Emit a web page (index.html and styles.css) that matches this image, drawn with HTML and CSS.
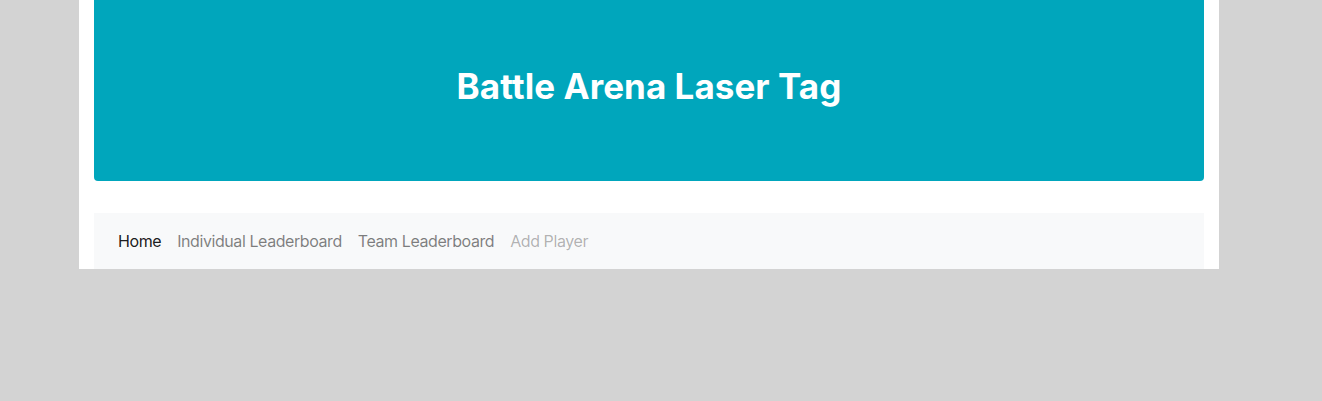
FILE: index.html
```html
<!DOCTYPE html>
<html>
<head>
<meta charset="utf-8">
<link rel="stylesheet" href="styles.css">
</head>
<body>
<div class="container">
  <div class="jumbotron">
    <h1 class="title">Battle Arena Laser Tag</h1>
  </div>
  <nav class="navbar">
    <a class="nav-link active" href="#">Home</a>
    <a class="nav-link" href="#">Individual Leaderboard</a>
    <a class="nav-link" href="#">Team Leaderboard</a>
    <a class="nav-link disabled" href="#">Add Player</a>
  </nav>
</div>
</body>
</html>
```

FILE: styles.css
```css
html, body {
  margin: 0;
  padding: 0;
  background: #d3d3d3;
  font-family: Inter, "Noto Sans", sans-serif;
}
.container {
  width: 1110px;
  margin-left: 79px;
  padding: 0 15px;
  background: #fff;
}
.jumbotron {
  height: 181px;
  background: #00a6bc;
  border-radius: 0 0 4px 4px;
  display: flex;
  align-items: center;
  justify-content: center;
  margin-bottom: 32px;
}
.title {
  margin: 0;
  color: #fff;
  font-size: 35px;
  font-weight: 700;
  letter-spacing: 0.05px;
  padding-bottom: 10px;
}
.navbar {
  height: 56px;
  background: #f8f9fa;
  display: flex;
  align-items: center;
  padding: 0 16px;
}
.nav-link {
  padding: 0 8px;
  font-size: 16px;
  color: rgba(0,0,0,.5);
  text-decoration: none;
  letter-spacing: -0.42px;
}
.nav-link.active { color: rgba(0,0,0,.9); }
.nav-link.disabled { color: rgba(0,0,0,.3); }
```
